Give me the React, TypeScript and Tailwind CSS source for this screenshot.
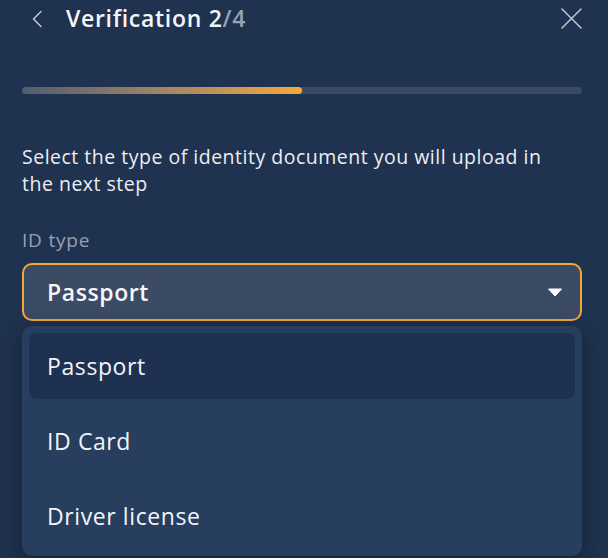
const options = ['Passport', 'ID Card', 'Driver license'];

export default function App() {
  const selected = 'Passport';

  return (
    <div
      className="w-[608px] h-[558px] overflow-hidden bg-[#1f324f] text-[#eef0f3] pl-[22px] pr-[26px] tracking-[0.6px]"
      style={{ fontFamily: '"Open Sans", "Noto Sans", sans-serif' }}
    >
      {/* Header */}
      <div className="flex items-center h-[37px]">
        <button className="w-[44px] flex items-center text-[#c9ced6]">
          <svg className="ml-[9px]" width="12" height="18" viewBox="0 0 12 18" fill="none">
            <path d="M10 1.5 L2.5 9 L10 16.5" stroke="currentColor" strokeWidth="1.4" strokeLinecap="round" strokeLinejoin="round" />
          </svg>
        </button>
        <h1 className="text-[23px] font-semibold text-[#f4f5f7] tracking-[0.7px]">
          Verification 2<span className="text-[#98a3b3]">/4</span>
        </h1>
        <button className="ml-auto text-[#c2c8d1]">
          <svg width="21" height="21" viewBox="0 0 21 21" fill="none">
            <path d="M1 1 L20 20 M20 1 L1 20" stroke="currentColor" strokeWidth="1.5" strokeLinecap="round" />
          </svg>
        </button>
      </div>

      {/* Progress */}
      <div className="mt-[50px] h-[7px] rounded-full bg-[#3a4b63] overflow-hidden">
        <div className="h-full w-1/2 rounded-full bg-gradient-to-r from-[#515d70] to-[#f6a935]" />
      </div>

      <p className="mt-[49px] pr-[22px] text-[19.5px] leading-[27px] tracking-[0.5px] text-[#eceef1]">
        Select the type of identity document you will upload in the next step
      </p>

      <div className="mt-[30px] text-[19px] leading-[27px] tracking-[0.8px] text-[#97a1b0]">ID type</div>

      <div className="relative mt-[9px]">
        <button className="w-full h-[58px] flex items-center rounded-[10px] border-2 border-[#f5a833] bg-[#3b4b63] pl-[23px] pr-[18px] tracking-[0.6px]">
          <span className="text-[23px] font-semibold text-[#f5f6f8]">{selected}</span>
          <svg className="ml-auto" width="14" height="9" viewBox="0 0 14 9">
            <path d="M0.5 1 L13.5 1 L7 8 Z" fill="#ffffff" stroke="#ffffff" strokeLinejoin="round" />
          </svg>
        </button>

        <ul className="absolute left-0 right-0 top-[63px] h-[230px] rounded-[10px] bg-[#273e5e] p-[7px] shadow-[0_6px_22px_rgba(8,16,30,0.45)]">
          {options.map((opt) => (
            <li
              key={opt}
              className={
                opt === selected
                  ? 'h-[66px] mb-[9px] flex items-center rounded-[8px] bg-[#1e3150] px-[18px] text-[23px] text-[#f2f4f6]'
                  : 'h-[66px] mb-[9px] flex items-center rounded-[8px] px-[18px] text-[23px] text-[#f2f4f6]'
              }
            >
              {opt}
            </li>
          ))}
        </ul>
      </div>
    </div>
  );
}
